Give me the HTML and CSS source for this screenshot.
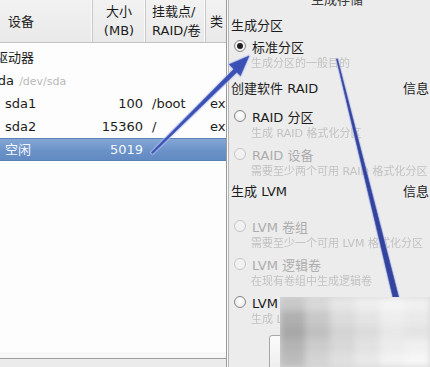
FILE: index.html
```html
<!DOCTYPE html>
<html lang="zh-CN">
<head>
<meta charset="utf-8">
<title>生成存储</title>
<link rel="stylesheet" href="styles.css">
</head>
<body>
<div class="screen">
  <section class="tree">
    <div class="thead">
      <div class="th th-dev">设备</div>
      <div class="th th-size">大小<br>(MB)</div>
      <div class="th th-mount">挂载点/<br>RAID/卷</div>
      <div class="th th-type">类</div>
    </div>
    <div class="tbody">
      <div class="tr"><span class="c-name lvl0">硬盘驱动器</span></div>
      <div class="tr"><span class="c-name lvl1">sda <span class="path">/dev/sda</span></span></div>
      <div class="tr"><span class="c-name lvl2">sda1</span><span class="c-size">100</span><span class="c-mount">/boot</span><span class="c-type">ext4</span></div>
      <div class="tr"><span class="c-name lvl2">sda2</span><span class="c-size">15360</span><span class="c-mount">/</span><span class="c-type">ext4</span></div>
      <div class="tr sel"><span class="c-name lvl2">空闲</span><span class="c-size">5019</span><span class="c-mount"></span><span class="c-type"></span></div>
    </div>
    <div class="tfoot"></div>
  </section>

  <section class="dialog">
    <div class="title">生成存储</div>

    <div class="head head-first">生成分区</div>
    <div class="opt opt-first"><span class="radio on"></span>标准分区</div>
    <div class="desc">生成分区的一般目的</div>

    <div class="head head-raid"><span>创建软件 RAID</span><span class="info">信息</span></div>
    <div class="opt opt-raid"><span class="radio"></span>RAID 分区</div>
    <div class="desc">生成 RAID 格式化分区</div>
    <div class="opt off"><span class="radio"></span>RAID 设备</div>
    <div class="desc">需要至少两个可用 RAID 格式化分区</div>

    <div class="head head-lvm"><span>生成 LVM</span><span class="info">信息</span></div>
    <div class="opt off opt-lvm"><span class="radio"></span>LVM 卷组</div>
    <div class="desc">需要至少一个可用 LVM 格式化分区</div>
    <div class="opt off"><span class="radio"></span>LVM 逻辑卷</div>
    <div class="desc">在现有卷组中生成逻辑卷</div>
    <div class="opt"><span class="radio"></span>LVM 物理卷</div>
    <div class="desc">生成 LVM 格式化分区</div>

    <div class="btn"></div>
  </section>

  <svg class="annot" width="430" height="367" viewBox="0 0 430 367" aria-hidden="true">
    <g class="glow">
      <polygon points="151.4,152.4 152.6,153.6 237.5,71.6 234.5,68.4"/>
      <polygon points="249,56 229.2,64.4 240.4,75.8"/>
      <polygon points="336.5,59.1 337.5,58.9 398.7,297.3 393.3,298.7"/>
    </g>
    <g class="ink">
      <polygon points="151.4,152.4 152.6,153.6 237.5,71.6 234.5,68.4"/>
      <polygon points="249,56 229.2,64.4 240.4,75.8"/>
      <polygon class="thin" points="336.5,59.1 337.5,58.9 398.7,297.3 393.3,298.7"/>
    </g>
  </svg>

  <div class="mosaic">
    <div class="mgrid">
      <i class="s200"></i><i class="s216"></i><i class="s230"></i><i class="s238"></i><i class="s244"></i><i class="s240"></i>
      <i class="s176"></i><i class="s200"></i><i class="s220"></i><i class="s228"></i><i class="s238"></i><i class="s234"></i>
      <i class="s168"></i><i class="s192"></i><i class="s212"></i><i class="s220"></i><i class="s232"></i><i class="s228"></i>
      <i class="s180"></i><i class="s204"></i><i class="s216"></i><i class="s226"></i><i class="s236"></i><i class="s240"></i>
      <i class="s188"></i><i class="s212"></i><i class="s224"></i><i class="s232"></i><i class="s242"></i><i class="s246"></i>
    </div>
  </div>
</div>
</body>
</html>
```

FILE: styles.css
```css
html, body {
  margin: 0;
  padding: 0;
}

body {
  width: 430px;
  height: 367px;
  overflow: hidden;
  font-family: "DejaVu Sans", "Noto Sans CJK SC", sans-serif;
  font-size: 13px;
  color: #1c1c1c;
  background: #ececec;
}

.screen {
  position: relative;
  display: flex;
  width: 430px;
  height: 367px;
  overflow: hidden;
}

/* ---------- left: partition tree ---------- */
.tree {
  width: 226px;
  flex: none;
  display: flex;
  flex-direction: column;
  background: #fdfdfd;
  border-right: 1px solid #9a9a9a;
  overflow: hidden;
}

.thead,
.tr {
  display: grid;
  grid-template-columns: 93px 53px 60px 1fr;
}

.thead {
  height: 42px;
  flex: none;
  background: linear-gradient(#f2f2f2, #e9e9e9);
  border-bottom: 1px solid #c2c2c2;
}

.th {
  border-right: 1px solid #c9c9c9;
  box-shadow: inset -1px 0 0 #fafafa;
  line-height: 19px;
  white-space: nowrap;
  overflow: hidden;
}

.th-dev {
  display: flex;
  align-items: center;
  padding-left: 8px;
}

.th-size {
  text-align: center;
  padding-top: 2px;
}

.th-mount {
  padding-top: 2px;
  padding-left: 6px;
}

.th-type {
  border-right: none;
  box-shadow: none;
  display: flex;
  align-items: center;
  padding-left: 4px;
}

.tbody {
  flex: 1;
  padding-top: 3px;
}

.tr {
  height: 23px;
  line-height: 23px;
  white-space: nowrap;
}

.c-name {
  overflow: visible;
}

.lvl0 { margin-left: -31px; }
.lvl1 { margin-left: -9px; }
.lvl2 { padding-left: 5px; }

.path {
  font-size: 11px;
  color: #b8b8b8;
  margin-left: 1px;
}

.c-size {
  text-align: right;
  padding-right: 3px;
}

.c-mount {
  padding-left: 6px;
}

.c-type {
  padding-left: 4px;
  overflow: hidden;
}

.tr.sel {
  background: linear-gradient(#86a8d6, #6b92c8 55%, #6189c2);
  box-shadow: inset 0 1px 0 #5b80b6, inset 0 -1px 0 #5a7fb3;
  color: #f4f8ff;
}

.tfoot {
  flex: none;
  height: 8px;
  border-top: 1px solid #9c9c9c;
  background: #ebebeb;
  box-shadow: 0 -6px 0 #f7f7f7;
}

/* ---------- right: create storage dialog ---------- */
.dialog {
  flex: 1;
  display: flex;
  flex-direction: column;
  padding-left: 3px;
  background: #ececec;
  border-left: 1px solid #fbfbfb;
  box-shadow: inset 1px 0 0 #b6b6b6;
  white-space: nowrap;
}

.title {
  margin-top: -9px;
  line-height: 18px;
  padding-left: 80px;
  color: #3a3a3a;
}

.head {
  display: flex;
  justify-content: space-between;
  line-height: 18px;
}

.head-first { margin-top: 8px; }
.head-raid  { margin-top: 7px; }
.head-lvm   { margin-top: 2px; }

.info {
  margin-right: 1px;
}

.opt {
  display: flex;
  align-items: center;
  gap: 6px;
  height: 18px;
  padding-left: 3px;
  margin-top: 2px;
}

.opt-raid { margin-top: 9px; }
.opt-lvm  { margin-top: 16px; }

.radio {
  width: 12px;
  height: 12px;
  box-sizing: border-box;
  border-radius: 50%;
  border: 1px solid #858585;
  background: radial-gradient(circle at 50% 40%, #ffffff, #e6e6e6);
  display: flex;
  align-items: center;
  justify-content: center;
  flex: none;
}

.radio.on::after {
  content: "";
  width: 6px;
  height: 6px;
  border-radius: 50%;
  background: #1e1e1e;
}

.opt.off {
  color: #adadad;
}

.opt.off .radio {
  border-color: #c6c6c6;
  background: #f1f1f1;
}

.desc {
  font-size: 11px;
  line-height: 18px;
  padding-left: 20px;
  color: #c2c2c2;
  filter: blur(0.6px);
}

.btn {
  margin-top: 6px;
  margin-left: 38px;
  width: 110px;
  height: 40px;
  flex: none;
  box-sizing: border-box;
  border: 1px solid #a6a6a6;
  border-radius: 3px;
  background: linear-gradient(#fbfbfb, #ececec);
}

/* ---------- annotation overlay ---------- */
.annot {
  position: absolute;
  left: 0;
  top: 0;
  pointer-events: none;
}

.annot .glow polygon {
  fill: #a9b6ec;
  stroke: #b9c4f0;
  stroke-width: 3;
  stroke-linejoin: round;
  opacity: 0.55;
}

.annot .ink polygon {
  fill: #3b50b4;
  stroke: #3b50b4;
  stroke-width: 0.6;
  stroke-linejoin: round;
}

.annot .ink polygon.thin {
  fill: #34449e;
  stroke: #34449e;
}

/* ---------- blurred mosaic patch ---------- */
.mosaic {
  position: absolute;
  left: 280px;
  top: 297px;
  width: 150px;
  height: 70px;
  overflow: hidden;
  background: #d8d8d8;
}

.mgrid {
  display: grid;
  grid-template-columns: repeat(6, 25px);
  grid-template-rows: repeat(5, 14px);
  filter: blur(3px);
  margin: -3px;
  padding: 3px;
}

.mgrid i { display: block; }

.s168 { background: #a8a8a8; }
.s176 { background: #b0b0b0; }
.s180 { background: #b4b4b4; }
.s188 { background: #bcbcbc; }
.s192 { background: #c0c0c0; }
.s200 { background: #c8c8c8; }
.s204 { background: #cccccc; }
.s212 { background: #d4d4d4; }
.s216 { background: #d8d8d8; }
.s220 { background: #dcdcdc; }
.s224 { background: #e0e0e0; }
.s226 { background: #e2e2e2; }
.s228 { background: #e4e4e4; }
.s230 { background: #e6e6e6; }
.s232 { background: #e8e8e8; }
.s234 { background: #eaeaea; }
.s236 { background: #ececec; }
.s238 { background: #eeeeee; }
.s240 { background: #f0f0f0; }
.s242 { background: #f2f2f2; }
.s244 { background: #f4f4f4; }
.s246 { background: #f6f6f6; }
```
